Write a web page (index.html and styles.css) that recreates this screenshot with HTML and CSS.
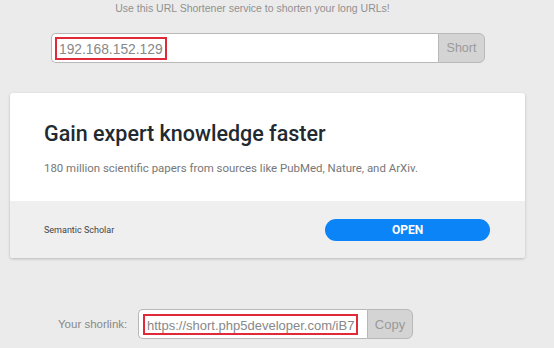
FILE: index.html
```html
<!DOCTYPE html>
<html>
<head>
<meta charset="utf-8">
<link rel="stylesheet" href="styles.css">
</head>
<body>
<div class="page">
  <p class="tagline">Use this URL Shortener service to shorten your long URLs!</p>
  <div class="url-group">
    <div class="url-field"><span class="mark">192.168.152.129</span></div>
    <div class="url-btn">Short</div>
  </div>
  <div class="card">
    <div class="card-body">
      <h1 class="card-title">Gain expert knowledge faster</h1>
      <p class="card-text">180 million scientific papers from sources like PubMed, Nature, and ArXiv.</p>
    </div>
    <div class="card-foot">
      <span class="brand">Semantic Scholar</span>
      <span class="open-btn">OPEN</span>
    </div>
  </div>
  <div class="result-row">
    <span class="result-label">Your shorlink:</span>
    <div class="url-group small">
      <div class="url-field"><span class="mark">https://short.php5developer.com/iB7</span></div>
      <div class="url-btn">Copy</div>
    </div>
  </div>
</div>
</body>
</html>
```
FILE: styles.css
```css
html, body {
  margin: 0;
  padding: 0;
  background: #ebebeb;
}
.page {
  width: 554px;
  height: 348px;
  overflow: hidden;
  display: flex;
  flex-direction: column;
  font-family: "Liberation Sans", Arial, sans-serif;
}
.tagline {
  margin: 0;
  padding: 1px 49px 0 0;
  height: 14px;
  line-height: 14px;
  font-size: 10.5px;
  color: #909090;
  text-align: center;
}
.url-group {
  display: flex;
  margin: 18px 0 0 51px;
  width: 434px;
  height: 30px;
  box-sizing: border-box;
}
.url-field {
  flex: 1;
  display: flex;
  align-items: center;
  background: #fff;
  border: 1px solid #b8b8b8;
  border-right: none;
  border-radius: 5px 0 0 5px;
  padding-left: 3px;
  box-sizing: border-box;
}
.mark {
  display: inline-block;
  border: 2px solid #e02a3a;
  padding: 0 2px;
  height: 23px;
  line-height: 21px;
  box-sizing: border-box;
  font-size: 13.8px;
  color: #888;
  font-family: "Liberation Sans", Arial, sans-serif;
}
.url-btn {
  width: 47px;
  display: flex;
  align-items: center;
  justify-content: center;
  background: #d4d4d4;
  border: 1px solid #b8b8b8;
  border-radius: 0 6px 6px 0;
  box-sizing: border-box;
  font-size: 12.5px;
  color: #9a9a9a;
}
.card {
  margin: 30px 0 0 10px;
  width: 515px;
  background: #fff;
  border-radius: 3px;
  box-shadow: 0 1px 3px rgba(0,0,0,0.22);
  font-family: Roboto, sans-serif;
  overflow: hidden;
}
.card-body {
  height: 108px;
  box-sizing: border-box;
  padding: 27px 34px 0 34px;
}
.card-title {
  margin: 0;
  font-size: 21.5px;
  line-height: 28px;
  font-weight: 500;
  color: #222a30;
}
.card-text {
  margin: 12px 0 0;
  font-size: 11.45px;
  line-height: 16px;
  color: #777;
}
.card-foot {
  height: 57px;
  background: #efefef;
  display: flex;
  align-items: center;
  justify-content: space-between;
  padding: 0 35px 0 34px;
  box-sizing: border-box;
}
.brand {
  font-size: 9px;
  color: #444;
}
.open-btn {
  width: 165px;
  height: 22px;
  border-radius: 11px;
  background: #0a84f6;
  color: #fff;
  font-size: 12px;
  font-weight: 700;
  display: flex;
  align-items: center;
  justify-content: center;
}
.result-row {
  display: flex;
  align-items: center;
  margin-top: 51px;
  padding-left: 58px;
}
.result-label {
  font-size: 11.5px;
  color: #888;
  width: 80px;
}
.url-group.small {
  margin: 0;
  width: 275px;
}
.url-group.small .url-field {
  padding-left: 4px;
}
.url-group.small .url-btn {
  width: 46px;
  font-size: 13px;
}
.url-group.small .mark {
  font-size: 13px;
  padding: 0 2px;
  height: 21px;
  line-height: 19px;
}
```
